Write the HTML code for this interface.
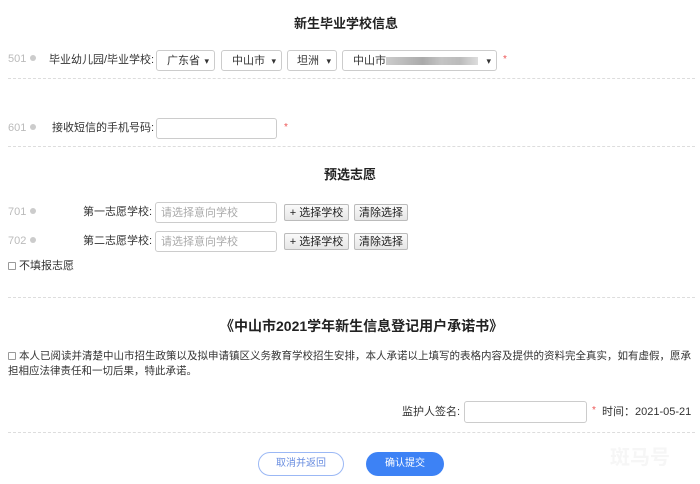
<!DOCTYPE html>
<html><head><meta charset="utf-8"><style>
*{margin:0;padding:0;box-sizing:border-box}
body{width:700px;height:484px;background:#fff;position:relative;overflow:hidden;font-family:"Liberation Sans","Noto Sans CJK SC",sans-serif;font-size:11px;color:#333}
.a{position:absolute;white-space:nowrap;line-height:14px}
.t{font-weight:bold;font-size:13px;color:#222;line-height:16px}
.num{color:#bbb;font-size:11px}
.dot{display:inline-block;width:6px;height:6px;border-radius:50%;background:#ccc;margin-left:4px;vertical-align:1px}
.box{position:absolute;border:1px solid #ccc;border-radius:3px;background:#fff;height:21px;display:flex;align-items:center;padding-left:8px;font-size:11px;line-height:14px}
.sel:after{content:"▾";position:absolute;right:5px;top:3px;font-size:9px;color:#333}
.star{color:#e55;font-size:10px}
.line{position:absolute;left:8px;width:687px;border-top:1px dashed #ddd}
.btn{position:absolute;border:1px solid #bbb;border-radius:2px;background:linear-gradient(#fafafa,#e6e6e6);height:17px;display:flex;align-items:center;justify-content:center;font-size:11px;line-height:14px;color:#222}
.ph{color:#aaa}
.cb{display:inline-block;width:8px;height:8px;border:1px solid #999;border-radius:1px;vertical-align:-1px;margin-right:3px}
.pill{position:absolute;display:flex;align-items:center;justify-content:center;border-radius:12px;font-size:10px;line-height:12px}
</style></head><body>
<div class="a t" style="left:294px;top:16px">新生毕业学校信息</div>

<div class="a num" style="left:8px;top:52px">501<span class="dot"></span></div>
<div class="a" style="left:49px;top:53px">毕业幼儿园/毕业学校:</div>
<div class="box sel" style="left:156px;top:50px;width:59px;padding-left:10px">广东省</div>
<div class="box sel" style="left:221px;top:50px;width:61px;padding-left:10px">中山市</div>
<div class="box sel" style="left:287px;top:50px;width:50px;padding-left:9px">坦洲</div>
<div class="box sel" style="left:342px;top:50px;width:155px;padding-left:10px">中山市<span style="display:inline-block;width:92px;height:8px;background:linear-gradient(90deg,#ccc,#bbb,#aaa,#c4c4c4,#bbb,#ddd)"></span></div>
<div class="a star" style="left:503px;top:53px">*</div>
<div class="line" style="top:78px"></div>

<div class="a num" style="left:8px;top:121px">601<span class="dot"></span></div>
<div class="a" style="left:52px;top:121px">接收短信的手机号码:</div>
<div class="box" style="left:156px;top:118px;width:121px"></div>
<div class="a star" style="left:284px;top:121px">*</div>
<div class="line" style="top:146px"></div>

<div class="a t" style="left:324px;top:167px">预选志愿</div>
<div class="a num" style="left:8px;top:205px">701<span class="dot"></span></div>
<div class="a" style="left:83px;top:205px">第一志愿学校:</div>
<div class="box ph" style="left:155px;top:202px;width:122px;padding-left:5px">请选择意向学校</div>
<div class="btn" style="left:284px;top:204px;width:65px">+ 选择学校</div>
<div class="btn" style="left:354px;top:204px;width:54px">清除选择</div>
<div class="a num" style="left:8px;top:234px">702<span class="dot"></span></div>
<div class="a" style="left:83px;top:234px">第二志愿学校:</div>
<div class="box ph" style="left:155px;top:231px;width:122px;padding-left:5px">请选择意向学校</div>
<div class="btn" style="left:284px;top:233px;width:65px">+ 选择学校</div>
<div class="btn" style="left:354px;top:233px;width:54px">清除选择</div>
<div class="a" style="left:8px;top:259px"><span class="cb"></span>不填报志愿</div>
<div class="line" style="top:297px"></div>

<div class="a t" style="left:220px;top:318px;font-size:14px">《中山市2021学年新生信息登记用户承诺书》</div>
<div class="a" style="left:8px;top:349px;white-space:normal;width:690px;line-height:15px;font-size:10.5px"><span class="cb"></span>本人已阅读并清楚中山市招生政策以及拟申请镇区义务教育学校招生安排，本人承诺以上填写的表格内容及提供的资料完全真实，如有虚假，愿承担相应法律责任和一切后果，特此承诺。</div>

<div class="a" style="left:402px;top:405px">监护人签名:</div>
<div class="box" style="left:464px;top:401px;width:123px;height:22px"></div>
<div class="a star" style="left:592px;top:404px">*</div>
<div class="a" style="left:602px;top:405px">时间：2021-05-21</div>
<div class="line" style="top:432px"></div>

<div class="pill" style="left:258px;top:452px;width:86px;height:24px;border:1px solid #9bb8f5;color:#6a8ee0">取消并返回</div>
<div class="pill" style="left:366px;top:452px;width:78px;height:24px;background:#3d82f5;color:#fff">确认提交</div>
<div class="a" style="left:610px;top:446px;font-size:20px;line-height:24px;color:#f6f6f6;font-weight:bold">斑马号</div>
</body></html>
